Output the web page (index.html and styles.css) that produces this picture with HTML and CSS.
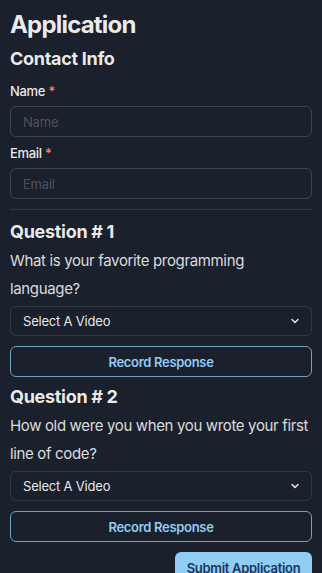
FILE: index.html
```html
<!DOCTYPE html>
<html lang="en">
<head>
    <meta charset="UTF-8">
    <meta name="viewport" content="width=device-width, initial-scale=1.0">
    <title>Application</title>
    <link rel="stylesheet" href="styles.css">
</head>
<body>
    <div class="page">
        <h1 class="title">Application</h1>

        <h2 class="section-title">Contact Info</h2>
        <label class="field-label" for="name">Name <span class="required">*</span></label>
        <input type="text" id="name" class="field" placeholder="Name">
        <label class="field-label" for="email">Email <span class="required">*</span></label>
        <input type="text" id="email" class="field" placeholder="Email">

        <hr class="divider">

        <div class="question">
            <h2 class="question-title">Question # 1</h2>
            <p class="prompt">What is your favorite programming language?</p>
            <div class="select">
                <span>Select A Video</span>
                <svg class="chevron" width="10" height="10" viewBox="0 0 10 10"><path d="M2 3.5 L5 6.5 L8 3.5" fill="none" stroke="currentColor" stroke-width="1.6" stroke-linecap="round" stroke-linejoin="round"/></svg>
            </div>
            <button class="record">Record Response</button>
        </div>

        <div class="question">
            <h2 class="question-title">Question # 2</h2>
            <p class="prompt">How old were you when you wrote your first line of code?</p>
            <div class="select">
                <span>Select A Video</span>
                <svg class="chevron" width="10" height="10" viewBox="0 0 10 10"><path d="M2 3.5 L5 6.5 L8 3.5" fill="none" stroke="currentColor" stroke-width="1.6" stroke-linecap="round" stroke-linejoin="round"/></svg>
            </div>
            <button class="record">Record Response</button>
        </div>

        <div class="actions">
            <button class="submit">Submit Application</button>
        </div>
    </div>
</body>
</html>
```

FILE: styles.css
```css
html, body {
    margin: 0;
    background-color: #1a202c;
}
body {
    font-family: Inter, "Noto Sans", sans-serif;
    color: rgba(255, 255, 255, 0.92);
}
.page {
    display: flex;
    flex-direction: column;
    padding: 10px 10px 0 10px;
}
.title {
    font-size: 24px;
    line-height: 29px;
    font-weight: 700;
    letter-spacing: -0.8px;
    margin: 0;
}
.section-title {
    font-size: 18px;
    line-height: 22px;
    font-weight: 700;
    letter-spacing: -0.3px;
    margin: 9px 0 11px 0;
}
.field-label {
    font-size: 13px;
    line-height: 20px;
    font-weight: 500;
    letter-spacing: -0.3px;
    margin-bottom: 5px;
}
.required {
    color: #fc8181;
}
.field {
    height: 31px;
    box-sizing: border-box;
    border: 1px solid rgba(255, 255, 255, 0.16);
    border-radius: 6px;
    background: transparent;
    padding: 0 12px;
    font-family: inherit;
    font-size: 13px;
    letter-spacing: -0.2px;
    color: inherit;
    margin: 0 0 6px 0;
}
.field::placeholder {
    color: rgba(255, 255, 255, 0.24);
}
.divider {
    border: none;
    border-top: 1px solid rgba(255, 255, 255, 0.12);
    margin: 4px 0 11px 0;
}
.question {
    display: flex;
    flex-direction: column;
    margin-bottom: 9px;
}
.question-title {
    font-size: 18px;
    line-height: 22px;
    font-weight: 700;
    letter-spacing: -0.3px;
    margin: 0;
}
.prompt {
    font-size: 15px;
    line-height: 28px;
    letter-spacing: -0.35px;
    margin: 4px 0 3px 0;
    color: rgba(255, 255, 255, 0.85);
}
.select {
    height: 30px;
    box-sizing: border-box;
    border: 1px solid rgba(255, 255, 255, 0.12);
    border-radius: 6px;
    display: flex;
    align-items: center;
    justify-content: space-between;
    padding: 0 11px 0 12px;
    font-size: 13px;
    letter-spacing: -0.2px;
    margin-bottom: 10px;
}
.chevron {
    color: rgba(255, 255, 255, 0.85);
}
.record {
    height: 31px;
    border: 1px solid rgba(144, 205, 244, 0.75);
    border-radius: 6px;
    background: transparent;
    color: #90cdf4;
    font-family: inherit;
    font-size: 13px;
    font-weight: 600;
    letter-spacing: -0.3px;
    cursor: pointer;
}
.actions {
    display: flex;
    justify-content: flex-end;
    padding-top: 1px;
}
.submit {
    width: 137px;
    height: 32px;
    border: none;
    border-radius: 6px;
    background-color: #90cdf4;
    color: #1a365d;
    font-family: inherit;
    font-size: 13px;
    font-weight: 600;
    letter-spacing: -0.3px;
    cursor: pointer;
}
```
